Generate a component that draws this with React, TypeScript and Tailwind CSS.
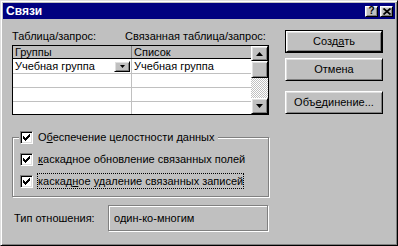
import React from "react";

// win98 look: raised / sunken edges
const raised =
  "bg-[#c0c0c0] border border-t-white border-l-white border-r-black border-b-black shadow-[inset_1px_1px_#dfdfdf,inset_-1px_-1px_#808080]";
const etched = "border border-[#808080] shadow-[1px_1px_0_#fff,inset_1px_1px_0_#fff]";

function Check() {
  const cols = [2, 3, 4, 3, 2, 1, 0];
  return (
    <svg width="7" height="7" viewBox="0 0 7 7" shapeRendering="crispEdges">
      {cols.map((y, x) => (
        <rect key={x} x={x} y={y} width="1" height="3" fill="#000" />
      ))}
    </svg>
  );
}

function CheckBox() {
  return (
    <div className="w-[13px] h-[13px] shrink-0 bg-white border border-t-[#808080] border-l-[#808080] border-r-white border-b-white shadow-[inset_1px_1px_#000,inset_-1px_-1px_#dfdfdf] flex items-center justify-center">
      <Check />
    </div>
  );
}

function Arrow({ up = false, w = 7 }: { up?: boolean; w?: number }) {
  const h = Math.ceil(w / 2);
  const pts = up ? `0,${h} ${w / 2},0 ${w},${h}` : `0,0 ${w},0 ${w / 2},${h}`;
  return (
    <svg width={w} height={h} viewBox={`0 0 ${w} ${h}`}>
      <polygon points={pts} fill="#000" />
    </svg>
  );
}

function CapButton({ children }: { children: React.ReactNode }) {
  return (
    <div className={`w-[13px] h-[11px] flex items-center justify-center ${raised}`}>{children}</div>
  );
}

function Button({ children }: { children: React.ReactNode }) {
  return <div className={`h-full w-full flex items-center justify-center ${raised}`}>{children}</div>;
}

export default function App() {
  return (
    <div className="w-[398px] h-[246px] bg-[#c0c0c0] border border-t-[#dfdfdf] border-l-[#dfdfdf] border-r-black border-b-black shadow-[inset_1px_1px_#fff,inset_-1px_-1px_#808080] p-[2px] flex flex-col font-['Liberation_Sans',Arial,sans-serif] text-[11px] text-black">
      {/* title bar */}
      <div className="h-[16px] shrink-0 bg-[#000080] flex items-center justify-between pl-[3px] pr-[2px]">
        <span className="text-white font-bold text-[12px] leading-none">Связи</span>
        <div className="flex gap-[2px]">
          <CapButton>
            <span className="font-bold text-[10px] leading-none">?</span>
          </CapButton>
          <CapButton>
            <svg width="8" height="7" viewBox="0 0 8 7">
              <path d="M0.5 0.5 L7.5 6.5 M7.5 0.5 L0.5 6.5" stroke="#000" strokeWidth="1.8" />
            </svg>
          </CapButton>
        </div>
      </div>

      {/* body */}
      <div className="flex-1 flex pl-[9px] pt-[11px]">
        <div className="w-[257px] flex flex-col">
          <div className="flex h-[13px] leading-[13px] whitespace-nowrap">
            <span className="w-[113px]">Таблица/запрос:</span>
            <span>Связанная таблица/запрос:</span>
          </div>

          {/* grid */}
          <div className="mt-[2px] h-[70px] border border-black flex">
            <div className="flex-1 flex flex-col bg-white">
              <div className="h-[13px] flex border-b border-black bg-[#c0c0c0] leading-[12px]">
                <div className="w-[119px] pl-[2px] border-r border-[#808080]">Группы</div>
                <div className="flex-1 pl-[2px]">Список</div>
              </div>
              <div className="h-[15px] flex border-b border-[#c0c0c0]">
                <div className="w-[119px] pl-[2px] pr-[1px] border-r border-[#c0c0c0] flex items-center justify-between">
                  <span>Учебная группа</span>
                  <div className={`w-[16px] h-[11px] flex items-center justify-center ${raised}`}>
                    <Arrow w={5} />
                  </div>
                </div>
                <div className="flex-1 pl-[2px] flex items-center">Учебная группа</div>
              </div>
              {["h-[14px]", "h-[14px]", "flex-1"].map((h, i) => (
                <div key={i} className={`${h} flex ${i < 2 ? "border-b border-[#c0c0c0]" : ""}`}>
                  <div className="w-[119px] border-r border-[#c0c0c0]" />
                  <div className="flex-1" />
                </div>
              ))}
            </div>
            <div className="w-[17px] flex flex-col">
              <div className={`h-[15px] flex items-center justify-center ${raised}`}>
                <Arrow up />
              </div>
              <div className={`h-[17px] ${raised}`} />
              <div className="flex-1 bg-[repeating-conic-gradient(#c0c0c0_0%_25%,#fff_0%_50%)] bg-[length:2px_2px]" />
              <div className={`h-[16px] flex items-center justify-center ${raised}`}>
                <Arrow />
              </div>
            </div>
          </div>

          {/* integrity group */}
          <fieldset className={`mt-[16px] min-w-0 pl-[6px] pb-[7px] ${etched}`}>
            <legend className="pl-[1px] pr-[4px] bg-[#c0c0c0]">
              <div className="h-[13px] flex items-center whitespace-nowrap">
                <CheckBox />
                <span className="ml-[5px] leading-[13px]">
                  О<span className="underline">б</span>еспечение целостности данных
                </span>
              </div>
            </legend>
            <div className="pt-[7px] pl-[1px] flex flex-col gap-[6px]">
              <div className="h-[16px] flex items-center whitespace-nowrap">
                <CheckBox />
                <span className="ml-[5px]">
                  <span className="underline">к</span>аскадное обновление связанных полей
                </span>
              </div>
              <div className="h-[16px] flex items-center whitespace-nowrap">
                <CheckBox />
                <span className="ml-[4px] h-[16px] leading-[14px] border border-dotted border-black">
                  каскад<span className="underline">н</span>ое удаление связанных записей
                </span>
              </div>
            </div>
          </fieldset>

          {/* relation type */}
          <div className="mt-[8px] flex items-center">
            <span className="w-[96px] pl-[2px]">Тип отношения:</span>
            <div className={`w-[160px] h-[26px] pl-[5px] flex items-center ${etched}`}>один-ко-многим</div>
          </div>
        </div>

        {/* buttons */}
        <div className="ml-[16px] w-[98px] flex flex-col">
          <div className="h-[23px] border border-black">
            <Button>
              Созд<span className="underline">а</span>ть
            </Button>
          </div>
          <div className="mt-[5px] h-[23px]">
            <Button>Отмена</Button>
          </div>
          <div className="mt-[10px] h-[23px]">
            <Button>
              Объ<span className="underline">е</span>динение...
            </Button>
          </div>
        </div>
      </div>
    </div>
  );
}
